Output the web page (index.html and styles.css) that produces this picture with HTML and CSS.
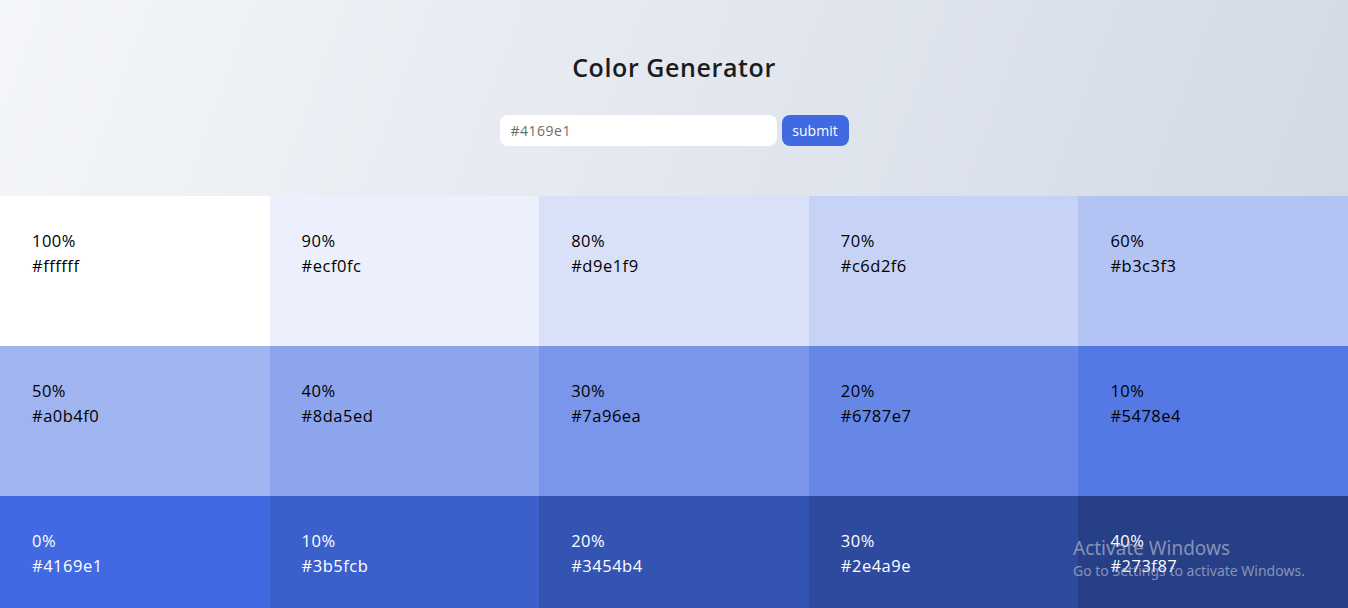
FILE: index.html
```html
<!DOCTYPE html>
<html lang="en">
<head>
<meta charset="utf-8">
<title>Color Generator</title>
<link rel="stylesheet" href="styles.css">
</head>
<body>
<header class="top">
  <h1 class="title">Color Generator</h1>
  <form class="form" onsubmit="return false">
    <input class="field" type="text" placeholder="#4169e1">
    <button class="btn" type="submit">submit</button>
  </form>
</header>
<main class="grid">
  <div class="cell" style="background:#ffffff"><p>100%</p><p>#ffffff</p></div>
  <div class="cell" style="background:#ecf0fc"><p>90%</p><p>#ecf0fc</p></div>
  <div class="cell" style="background:#d9e1f9"><p>80%</p><p>#d9e1f9</p></div>
  <div class="cell" style="background:#c6d2f6"><p>70%</p><p>#c6d2f6</p></div>
  <div class="cell" style="background:#b3c3f3"><p>60%</p><p>#b3c3f3</p></div>
  <div class="cell" style="background:#a0b4f0"><p>50%</p><p>#a0b4f0</p></div>
  <div class="cell" style="background:#8da5ed"><p>40%</p><p>#8da5ed</p></div>
  <div class="cell" style="background:#7a96ea"><p>30%</p><p>#7a96ea</p></div>
  <div class="cell" style="background:#6787e7"><p>20%</p><p>#6787e7</p></div>
  <div class="cell" style="background:#5478e4"><p>10%</p><p>#5478e4</p></div>
  <div class="cell light" style="background:#4169e1"><p>0%</p><p>#4169e1</p></div>
  <div class="cell light" style="background:#3b5fcb"><p>10%</p><p>#3b5fcb</p></div>
  <div class="cell light" style="background:#3454b4"><p>20%</p><p>#3454b4</p></div>
  <div class="cell light" style="background:#2e4a9e"><p>30%</p><p>#2e4a9e</p></div>
  <div class="cell light" style="background:#273f87"><p>40%</p><p>#273f87</p></div>
</main>
<div class="watermark">
  <div class="wm-title">Activate Windows</div>
  <div class="wm-sub">Go to Settings to activate Windows.</div>
</div>
</body>
</html>
```
FILE: styles.css
```css
* { box-sizing: border-box; }
html, body { margin: 0; padding: 0; }
body {
  font-family: "Open Sans", "Liberation Sans", sans-serif;
  color: #111;
  overflow: hidden;
  background: #d5dce8;
}
.top {
  height: 196px;
  background: linear-gradient(110deg, #f4f6f9 0%, #d3dae6 100%);
  display: flex;
  flex-direction: column;
  align-items: center;
  padding-top: 50px;
}
.title {
  margin: 0;
  font-size: 25px;
  font-weight: 600;
  line-height: 34px;
  color: #1c1c1c;
  letter-spacing: 0.6px;
}
.form {
  margin-top: 31px;
  display: flex;
  gap: 5px;
}
.field {
  width: 277px;
  height: 31px;
  border: none;
  border-radius: 8px;
  background: #fff;
  padding: 0 11px;
  font-family: inherit;
  font-size: 14px;
  letter-spacing: 0.5px;
  outline: none;
}
.field::placeholder { color: #6b6b6b; }
.btn {
  width: 67px;
  height: 31px;
  border: none;
  border-radius: 8px;
  background: #4169e1;
  color: #fff;
  font-family: inherit;
  font-size: 14px;
  padding: 0;
}
.grid {
  display: grid;
  grid-template-columns: repeat(5, 1fr);
  grid-auto-rows: 150px;
}
.cell {
  padding: 32px 32px;
  color: #000;
  font-size: 16.5px;
  letter-spacing: 0.5px;
}
.cell p { margin: 0; line-height: 25px; }
.cell.light { color: #fff; }
.watermark {
  position: absolute;
  left: 1073px;
  top: 536px;
  color: rgba(200, 205, 215, 0.6);
  font-family: "Noto Sans", "Open Sans", sans-serif;
}
.wm-title { font-size: 19px; line-height: 24px; }
.wm-sub { font-size: 14px; line-height: 22px; }
```
